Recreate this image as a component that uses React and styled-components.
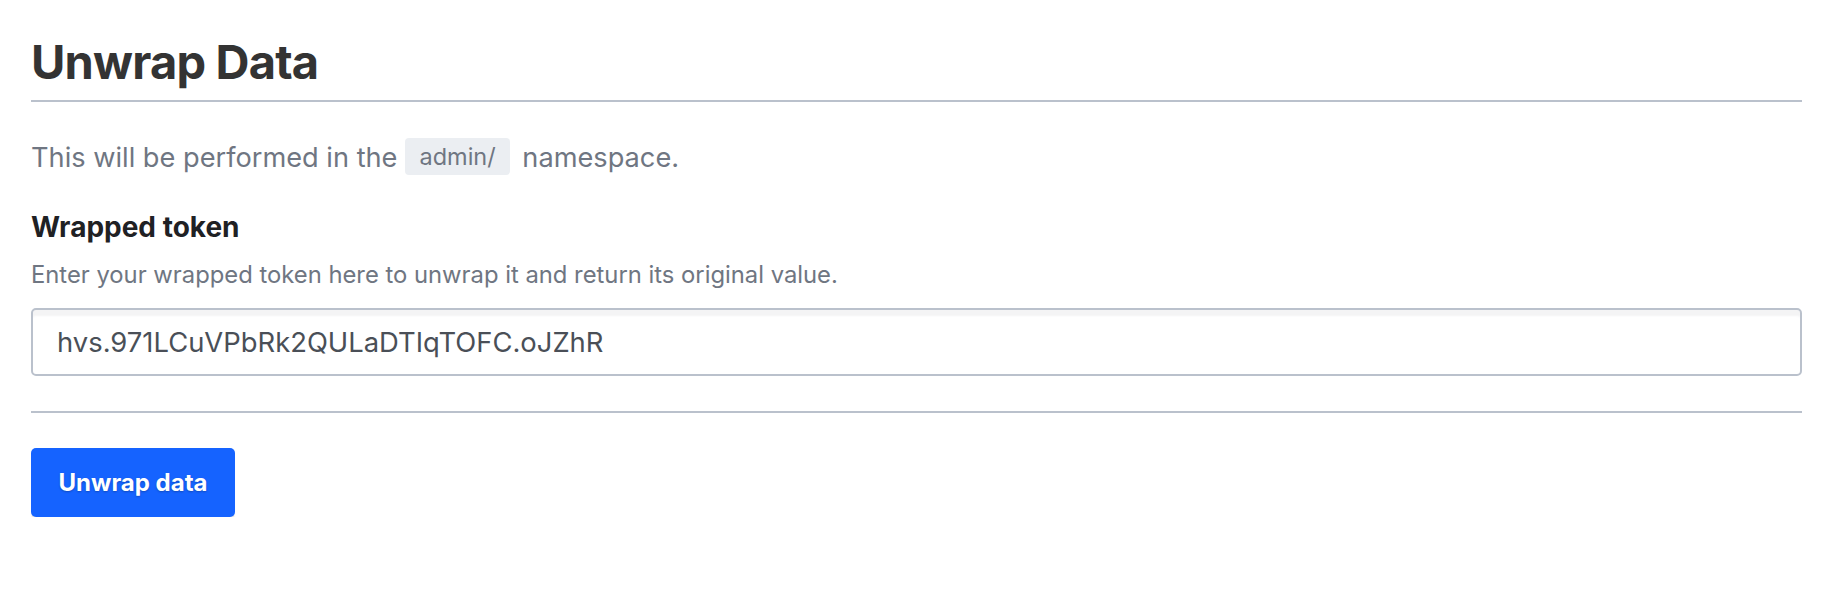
import React from 'react';
import styled, { createGlobalStyle } from 'styled-components';

const GlobalStyle = createGlobalStyle`
  html, body {
    margin: 0;
    padding: 0;
    background: #ffffff;
  }
  body {
    font-family: Inter, "Noto Sans", "Liberation Sans", sans-serif;
    -webkit-font-smoothing: antialiased;
  }
`;

const Page = styled.div`
  display: flex;
  flex-direction: column;
  padding: 32px 44px 0 31px;
`;

const Title = styled.h1`
  margin: 0;
  font-size: 47px;
  line-height: 60px;
  font-weight: 700;
  letter-spacing: -0.8px;
  color: #333333;
`;

const Rule = styled.hr`
  margin: ${({ $top }) => $top}px 0 0 0;
  border: none;
  height: 2px;
  background: #bac1cc;
`;

const Intro = styled.p`
  margin: 36px 0 0 0;
  font-size: 27.2px;
  line-height: 40px;
  color: #6f7682;
`;

const Code = styled.code`
  display: inline-block;
  vertical-align: 2px;
  height: 37px;
  line-height: 37px;
  padding: 0 14px;
  margin: 0 5px 0 8px;
  border-radius: 4px;
  background: #ebeef2;
  font-family: Inter, "Noto Sans", "Liberation Sans", sans-serif;
  font-size: 23.5px;
  color: #6f7682;
`;

const Field = styled.div`
  display: flex;
  flex-direction: column;
  margin-top: 29px;
`;

const Label = styled.label`
  font-size: 28px;
  line-height: 40px;
  font-weight: 700;
  color: #1f2124;
`;

const Help = styled.p`
  margin: 11px 0 0 0;
  font-size: 23.8px;
  line-height: 34px;
  color: #6f7682;
`;

const Input = styled.input`
  box-sizing: border-box;
  margin-top: 16px;
  width: 100%;
  height: 68px;
  padding: 0 24px;
  border: 2px solid #bac1cc;
  border-radius: 5px;
  box-shadow: inset 0 8px 2px -2px rgba(97, 104, 117, 0.07);
  background: #ffffff;
  font-family: Inter, "Noto Sans", "Liberation Sans", sans-serif;
  font-size: 27.4px;
  color: #4a4f57;
  outline: none;
`;

const Actions = styled.div`
  display: flex;
  margin-top: 35px;
`;

const Button = styled.button`
  box-sizing: border-box;
  width: 204px;
  height: 69px;
  border: none;
  border-radius: 5px;
  background: #1563ff;
  box-shadow: 0 6px 2px -1px rgba(10, 10, 10, 0.12);
  font-family: Inter, "Noto Sans", "Liberation Sans", sans-serif;
  font-size: 24px;
  font-weight: 700;
  color: #ffffff;
  text-shadow: 0 1px 2px rgba(0, 0, 0, 0.25);
  cursor: pointer;
`;

export default function App() {
  return (
    <>
      <GlobalStyle />
      <Page>
        <Title>Unwrap Data</Title>
        <Rule $top={8} />
        <Intro>
          This will be performed in the<Code>admin/</Code> namespace.
        </Intro>
        <Field>
          <Label htmlFor="token">Wrapped token</Label>
          <Help>Enter your wrapped token here to unwrap it and return its original value.</Help>
          <Input id="token" defaultValue="hvs.971LCuVPbRk2QULaDTIqTOFC.oJZhR" />
        </Field>
        <Rule $top={35} />
        <Actions>
          <Button>Unwrap data</Button>
        </Actions>
      </Page>
    </>
  );
}
